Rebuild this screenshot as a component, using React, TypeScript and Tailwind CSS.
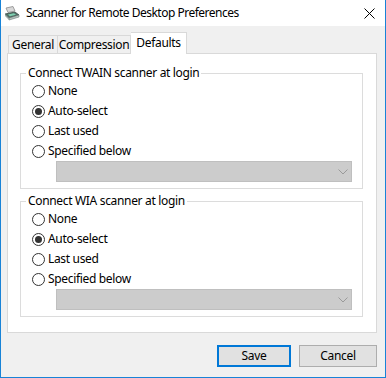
import React from "react";

function Radio({ label, checked }: { label: string; checked?: boolean }) {
  return (
    <div className="flex h-[20px] items-center">
      <div className="ml-[11px] flex h-[13px] w-[13px] items-center justify-center rounded-full border border-[#333333] bg-white">
        {checked && <div className="h-[7px] w-[7px] rounded-full bg-[#333333]" />}
      </div>
      <span className="ml-[3px] text-[12px] leading-[16px] tracking-[-0.33px] text-black">{label}</span>
    </div>
  );
}

function Dropdown() {
  return (
    <div className="ml-[35px] mr-[10px] flex h-[21px] items-center justify-end border border-[#bfbfbf] bg-[#cccccc] pr-[3px]">
      <svg width="10" height="6" viewBox="0 0 10 6">
        <polyline points="0.5,0.5 5,5 9.5,0.5" fill="none" stroke="#9a9a9a" strokeWidth="1" />
      </svg>
    </div>
  );
}

function Group({ title, className }: { title: string; className?: string }) {
  return (
    <fieldset className={"border border-[#dcdcdc] pb-[6px] " + (className ?? "")}>
      <legend className="ml-[5px] px-[2px] text-[12px] leading-[16px] tracking-[-0.33px] text-black">{title}</legend>
      <div className="flex flex-col">
        <Radio label="None" />
        <Radio label="Auto-select" checked />
        <Radio label="Last used" />
        <Radio label="Specified below" />
        <Dropdown />
      </div>
    </fieldset>
  );
}

export default function App() {
  return (
    <div className="flex h-[378px] w-[386px] flex-col border-x border-b border-[#1883d7] bg-[#f0f0f0] font-['Segoe_UI','Noto_Sans',sans-serif] text-black">
      <div className="flex h-[26px] items-center bg-white">
        <svg className="ml-[3px]" width="16" height="15" viewBox="0 0 16 15">
          <path d="M2 2 L9 0.5 L11 5 L4 6.5 Z" fill="#d8d8d8" stroke="#8a8a8a" strokeWidth="0.8" />
          <path d="M1 8 L11 6 L15 9 L5 12 Z" fill="#4f6f66" stroke="#3a4a45" strokeWidth="0.8" />
          <path d="M5 12 L15 9 L15 11 L5 14 Z" fill="#b8c4c0" stroke="#6a7a75" strokeWidth="0.6" />
          <path d="M1 8 L5 12 L5 14 L1 10 Z" fill="#9aa8a4" />
          <path d="M4 8.5 L10 7.3 L12 8.8 L6 10.2 Z" fill="#7fd0b0" />
        </svg>
        <span className="ml-[6px] text-[12px] leading-[16px] tracking-[-0.5px]">Scanner for Remote Desktop Preferences</span>
        <svg className="ml-auto mr-[10px]" width="11" height="11" viewBox="0 0 11 11">
          <path d="M0.5 0.5 L10.5 10.5 M10.5 0.5 L0.5 10.5" stroke="#000" strokeWidth="1" />
        </svg>
      </div>
      <div className="flex flex-1 flex-col pl-[6px] pr-[8px]">
        <div className="ml-[1px] mt-[6px] flex h-[21px] items-end text-[12px] leading-[16px] tracking-[-0.33px]">
          <div className="flex h-[18px] w-[50px] items-center justify-center border border-b-0 border-[#d9d9d9] bg-[#f0f0f0]">General</div>
          <div className="flex h-[18px] w-[73px] items-center justify-center border border-b-0 border-l-0 border-[#d9d9d9] bg-[#f0f0f0]">Compression</div>
          <div className="relative z-10 -mb-px flex h-[22px] w-[56px] items-start justify-center border border-b-0 border-l-0 border-[#d9d9d9] bg-white pt-[2px]">Defaults</div>
        </div>
        <div className="flex h-[280px] flex-col border border-[#d9d9d9] bg-white pl-[12px] pr-[13px] pt-[11px]">
          <Group title="Connect TWAIN scanner at login" />
          <Group title="Connect WIA scanner at login" className="mt-[4px]" />
        </div>
        <div className="mt-[12px] flex justify-end gap-[8px] text-[12px] tracking-[-0.33px]">
          <div className="flex h-[22px] w-[74px] items-center justify-center border-2 border-[#0078d7] bg-[#e1e1e1]">Save</div>
          <div className="flex h-[22px] w-[78px] items-center justify-center border border-[#adadad] bg-[#e1e1e1]">Cancel</div>
        </div>
      </div>
    </div>
  );
}
